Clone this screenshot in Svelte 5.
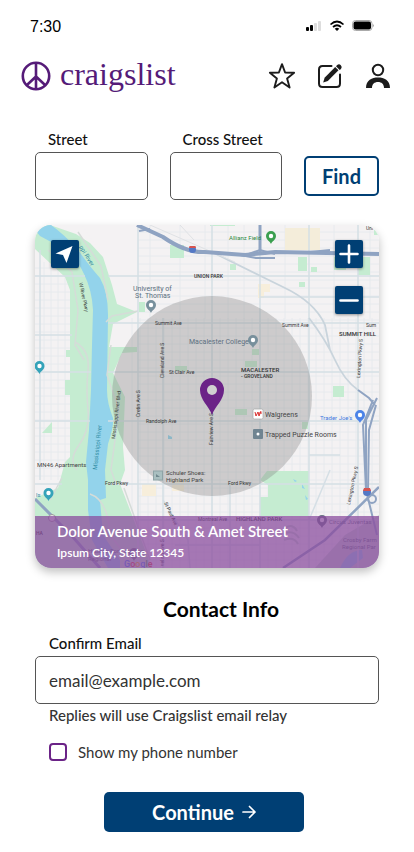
<script>
  let street = $state('');
  let crossStreet = $state('');
  let email = $state('email@example.com');
  let showPhone = $state(false);

  const range = (from, to, step) => {
    const out = [];
    for (let v = from; v <= to; v += step) out.push(v);
    return out;
  };
  const minorX = range(132, 378, 8);
  const minorY = range(232, 566, 8);
  const majorX = [138, 163, 212, 260, 309, 358];
  const majorY = [276, 323, 372, 421, 484, 520];

  // [text, x, y, class, rotation]
  const labels = [
    ['Allianz Field', 229, 240, 'park small', 0],
    ['UNION PARK', 194, 278, 'area', 0],
    ['University of', 133, 291, 'place', 0],
    ['St. Thomas', 135, 298, 'place', 0],
    ['Summit Ave', 155, 325, 'road', 0],
    ['Summit Ave', 282, 327, 'road', 0],
    ['Sum', 366, 327, 'road', 0],
    ['Uni', 366, 230, 'road', 0],
    ['SUMMIT HILL', 339, 336, 'area wide', 0],
    ['Macalester College', 189, 344, 'place', 0],
    ['St Clair Ave', 169, 374, 'road', 0],
    ['MACALESTER', 241, 372, 'area wide', 0],
    ['- GROVELAND', 241, 378, 'area', 0],
    ['Randolph Ave', 146, 423, 'road', 0],
    ['Walgreens', 265, 417, 'shop', 0],
    ['Trapped Puzzle Rooms', 265, 437, 'shop', 0],
    ["Trader Joe's", 320, 420, 'blue small', 0],
    ['MN46 Apartments', 37, 467, 'shop small', 0],
    ['Schuler Shoes:', 166, 475, 'shop small', 0],
    ['Highland Park', 166, 482, 'shop small', 0],
    ['Ford Pkwy', 105, 485, 'road', 0],
    ['Ford Pkwy', 228, 485, 'road', 0],
    ['Montreal Ave', 198, 521, 'road', 0],
    ['HIGHLAND PARK', 236, 521, 'area wide', 0],
    ['Circus Juventas', 329, 524, 'place small', 0],
    ['Crosby Farm', 343, 542, 'place small', 0],
    ['Regional Par', 342, 549, 'place small', 0],
    ['Historic Fort Snelling', 88, 553, 'place small', 0],
    ['Regional', 88, 561, 'place small', 0],
    ['ls', 36, 497, 'water', 0],
    ['HA', 36, 535, 'area', 0],
    ['W River Pkwy', 79, 283, 'road', 78],
    ['ppi River', 79, 247, 'water', 58],
    ['Mississippi River', 97, 470, 'water', -84],
    ['Mississippi River Blvd', 115, 439, 'road', -83],
    ['Cretin Ave S', 140, 417, 'road', -90],
    ['Cleveland Ave S', 164, 378, 'road', -90],
    ['Fairview Ave S', 213, 445, 'road', -90],
    ['Lexington Pkwy S', 360, 378, 'road', -86],
    ['Lexington Pkwy S', 350, 505, 'road', -78],
    ['St Paul Ave', 164, 503, 'road', 65],
    ['vel nd Ave S', 164, 566, 'road', -90],
  ];
</script>

<div class="app">
  <div class="status">
    <span>7:30</span>
    <svg width="68" height="12" viewBox="0 0 68 12" aria-hidden="true">
      <rect x="0" y="7" width="3" height="4" rx="1" />
      <rect x="4" y="5" width="3" height="6" rx="1" />
      <rect x="8" y="3" width="3" height="8" rx="1" fill="#ddd" />
      <rect x="12" y="1" width="3" height="10" rx="1" fill="#ddd" />
      <path d="M24.5 4.5Q31 -1.5 37.500 4.500M27 7Q31 3.500 35 7" fill="none" stroke="#000" stroke-width="1.700" />
      <path d="M28.700 8.700Q31 7 33.300 8.700L31 11Z" />
      <rect x="46.500" y=".5" width="19.500" height="10" rx="3" fill="#fff" stroke="#aaa" />
      <rect x="47.500" y="1.500" width="17.500" height="8" rx="2" />
      <path d="M66.800 4v3q1-.5 1-1.500t-1-1.500Z" fill="#999" />
    </svg>
  </div>

  <header>
    <a class="brand" href="/">
      <svg width="30" height="30" viewBox="0 0 30 30" fill="none" stroke="#551b78" stroke-width="2.600" aria-hidden="true">
        <circle cx="15" cy="15" r="13.200" />
        <path d="M15 2v26M15 15.500L5.700 24.300M15 15.500l9.300 8.800" />
      </svg>
      <span>craigslist</span>
    </a>
    <nav>
      <button type="button" aria-label="Favorites">
        <svg width="28" height="28" viewBox="0 0 28 28" fill="none" stroke="#1c1c1c" stroke-width="1.900" stroke-linejoin="round">
          <path d="M14 2.200l3.100 8.300 9 .2-7 5.700 2.500 9.100-7.600-5.200-7.600 5.200 2.500-9.100-7-5.700 9-.2Z" />
        </svg>
      </button>
      <button type="button" aria-label="New post">
        <svg width="28" height="28" viewBox="0 0 28 28" fill="none" stroke="#1c1c1c" stroke-width="2" stroke-linecap="round">
          <path d="M15.500 4H6.500q-3.500 0-3.500 3.500v14q0 3.500 3.500 3.500h14q3.500 0 3.500-3.500V12.500" />
          <path d="M8.600 15.700L19.200 5l3.300 3.200-10.700 10.700-4.600 1.700Z" fill="#1c1c1c" stroke="none" />
          <path d="M20 4.300l1.200-1.200a2.700 2.700 0 0 1 3.800 3.800l-1.300 1.200Z" fill="#1c1c1c" stroke="none" />
        </svg>
      </button>
      <button type="button" aria-label="Account">
        <svg width="28" height="28" viewBox="0 0 28 28" fill="none">
          <circle cx="14" cy="8" r="5.200" stroke="#1c1c1c" stroke-width="2" />
          <path d="M2 26C2 18 8 15.500 14 15.500s12 2.500 12 10.500h-6c0-4-2.500-6-6-6s-6 2-6 6Z" fill="#1c1c1c" />
        </svg>
      </button>
    </nav>
  </header>

  <main>
    <form class="search" onsubmit={(e) => e.preventDefault()}>
      <div class="field">
        <label for="street">Street</label>
        <input id="street" type="text" bind:value={street} />
      </div>
      <div class="field">
        <label for="cross">Cross Street</label>
        <input id="cross" type="text" bind:value={crossStreet} />
      </div>
      <button class="find" type="submit">Find</button>
    </form>

    <section class="map" aria-label="Map">
      <svg class="canvas" viewBox="35 225 344 343" preserveAspectRatio="xMidYMid slice">
        <rect x="35" y="225" width="344" height="343" fill="#f4f2f3" />
        <g stroke="#e4e8ec" stroke-width=".8">
          {#each minorX as x}<path d="M{x} 318V568" />{/each}
          {#each minorY as y}<path d="M138 {y}H379" />{/each}
          {#each range(44, 72, 7) as x}<path d="M{x} 262V480" />{/each}
          {#each range(268, 476, 8) as y}<path d="M35 {y}H70" />{/each}
          <path d="M205 225v94M228 225v94M244 225v94M285 225v94M334 225v94M370 225v94M180 225v94M150 225v94" />
        </g>
        <path d="M82 225H138V310H118L104 258Z" fill="#f4f2f3" />
        <path d="M285 228h21v22h-21ZM306 228h14v22h-14Z" fill="#f4edda" />
        <path d="M258 284h12v8h-6v6h-6ZM142 484h14v12h-14ZM172 479h12v12h-12Z" fill="#f7eedb" />
        <g fill="#c5ecd1">
          <path d="M35 225H50L76 234 90 243 103 257 112 285 117 304 137 312 113 324 109 347H137V352L122 353 113 373 125 397 123 447 125 470 120 484 132 515 152 568H35V498L58 488 65 462 70 457V395H65V380H70V357H66V350H70V290L65 277 35 249Z" />
          <path d="M170 245h14v13h-14ZM139 302h6v10h-6ZM230 264h6v6h-6ZM298 257h9v14h-9ZM311 267h6v5h-6ZM299 282h6v5h-6ZM358 257h12v18h-12ZM334 257h12v13h-12ZM333 386h11v11h-11ZM245 361h12v6h-12ZM252 349h7v6h-7ZM235 409h12v6h-12ZM302 422h6v7h-6ZM175 366h12v5h-12ZM42 433l10-11v11Z" />
          <path d="M267 471H309V516H260V497H268V485L260 480Z" />
          <path d="M210 225h25v1h-25ZM374 230h5v5h-5Z" />
        </g>
        <path d="M315 568L345 535 379 515V568Z" fill="#c8d8d1" />
        <g fill="#93d3eb">
          <path d="M37 225H51Q65 235 78 250 91 268 100 278 108 292 108 315L107 390Q107 403 113 418 114 426 108 444L105 470 106 498 100 500 103 535 120 560V568H108L92 540 88 510V480L86 462 89 430 91 390 92 345 93 310Q92 290 84 274 75 255 66 250L40 236 35 230V225Z" />
          <path d="M340 568Q348 550 362 550L363 558 350 568ZM293 479l4 2-2 1ZM302 484l3 5-3-1ZM305 495l3 4-2 1ZM168 435l4 2v2h-4Z" />
        </g>
        <g fill="none" stroke="#d5dfe5" stroke-width="1.500">
          <path d="M48 250L72 272 78 310 75 345 84 360M75 342Q90 350 88 370T88 410 79 445 77 470M78 232L101 266 108 300M111 345L107 375 119 410 115 440 111 470 116 484M50 500L62 478M90 494Q108 500 110 535L136 568M124 488L150 560M106 322L112 316 138 311" stroke="#d5dcd8" />
          {#each majorX as x}<path d="M{x} {x === 163 ? 318 : 225}V568" />{/each}
          {#each majorY as y}<path d="M{y < 500 ? 108 : 138} {y}H379" />{/each}
          <path d="M35 276H85M35 335H72M35 372H91M35 421H90M35 484H62M40 250V480M260 297H379" />
          <path d="M163 500L188 540 190 568M175 545H260M230 484V568M309 520L330 470M309 455H340" />
        </g>
        <g fill="none" stroke="#c9d4dc" stroke-width="1.800">
          <path d="M212 252L283 287Q315 302 325 325L330 350M309 318Q326 340 335 360T358 390" />
          <path d="M150 225L235 262M180 225L194 240" stroke="#dfe1e4" stroke-width="1" />
        </g>
        <g fill="none" stroke="#8fa3c2">
          <path d="M137 225L163 237Q186 253 205 252L245 255 275 252 379 254" stroke-width="4" />
          <path d="M139 231L150 229M235 254L256 258H275M246 255L260 250 275 254M310 252L330 250" stroke-width="2" />
          <path d="M260 225V252" stroke-width="3" />
          <path d="M358 390L369 398 375 405M377 398L366 420V490L377 535M373 400L363 425 366 490M376 405L369 430 368 490" stroke-width="2" />
          <path d="M379 487L325 540 283 568" stroke-width="2.500" />
          <circle cx="372" cy="499" r="4" stroke-width="2" />
          <path d="M35 499L72 536 100 568" stroke-width="3" />
        </g>
        <path d="M285 528q8-5 12 3M283 534q10-5 16 4M284 540q10-4 14 4" fill="none" stroke="#c3d5ce" stroke-width="2" />
        <circle cx="192.500" cy="249.500" r="3.500" fill="#5478c5" /><path d="M189 248h7l-.5-2h-6Z" fill="#d65450" />
        <circle cx="367" cy="492" r="4" fill="#5478c5" /><path d="M363 491h8l-1-3h-6Z" fill="#d65450" />
        <circle cx="52" cy="518" r="3.500" fill="#eee" stroke="#999" />

        <circle cx="212" cy="396" r="100" fill="#828282" fill-opacity=".34" />

        {#snippet marker(x, y, color)}
          <path d="M{x} {y + 8}C{x - 1} {y + 5} {x - 5} {y + 4} {x - 5} {y}a5 5 0 0 1 10 0C{x + 5} {y + 4} {x + 1} {y + 5} {x} {y + 8}Z" fill={color} />
          <circle cx={x} cy={y} r="2.200" fill="#fff" />
        {/snippet}
        {@render marker(271, 236, '#3b9f50')}
        {@render marker(151, 305, '#78909c')}
        {@render marker(253, 340, '#78909c')}
        {@render marker(39.500, 366, '#35a3b9')}
        {@render marker(48.500, 493, '#35a3b9')}
        {@render marker(360, 415, '#4c83e8')}
        {@render marker(322, 520, '#687083')}
        {@render marker(134, 553, '#7c8791')}
        <rect x="253" y="409" width="10" height="10" rx="1.500" fill="#fff" stroke="#a7a7a7" stroke-width=".7" />
        <path d="M255 412l1 4 2-4 1 4 2-5M259 413h3" fill="none" stroke="#d92d2d" />
        <rect x="253" y="429" width="10" height="10" rx="1" fill="#708491" /><circle cx="258" cy="434" r="1.500" fill="#fff" />
        <rect x="153.500" y="471" width="9" height="9" fill="#a9bfc0" stroke="#8ea3a6" /><path d="M156 474l4 3h-4Z" fill="#70898e" />

        {#each labels as [text, x, y, kind, angle]}
          <text class={kind} {x} {y} transform={angle ? `rotate(${angle} ${x} ${y})` : undefined}>{text}</text>
        {/each}
        <text class="google" x="124" y="567"><tspan fill="#4285f4">G</tspan><tspan fill="#ea4335">o</tspan><tspan fill="#fbbc05">o</tspan><tspan fill="#4285f4">g</tspan><tspan fill="#34a853">l</tspan><tspan fill="#ea4335">e</tspan></text>

        <path d="M212 415C209 406 200 400 200 390a12 12 0 0 1 24 0C224 400 215 406 212 415Z" fill="#6b2387" />
        <circle cx="212" cy="390" r="5" fill="#d0d0d0" />
      </svg>

      <button class="tool locate" type="button" aria-label="My location">
        <svg width="28" height="28" viewBox="0 0 28 28"><path d="M21.500 6L15.500 23l-3.500-8-7.500-1.500Z" fill="#fff" /></svg>
      </button>
      <div class="zoom">
        <button class="tool" type="button" aria-label="Zoom in">
          <svg width="28" height="28" viewBox="0 0 28 28"><path d="M5.500 14h17M14 5.500v17" stroke="#fff" stroke-width="2.600" stroke-linecap="round" /></svg>
        </button>
        <button class="tool" type="button" aria-label="Zoom out">
          <svg width="28" height="28" viewBox="0 0 28 28"><path d="M5.500 14.500h17" stroke="#fff" stroke-width="2.600" stroke-linecap="round" /></svg>
        </button>
      </div>
      <div class="caption">
        <p class="cross">Dolor Avenue South &amp; Amet Street</p>
        <p class="city">Ipsum City, State 12345</p>
      </div>
    </section>

    <section class="contact">
      <h2>Contact Info</h2>
      <div class="field">
        <label for="email">Confirm Email</label>
        <input id="email" type="email" aria-describedby="relay" bind:value={email} />
      </div>
      <p id="relay">Replies will use Craigslist email relay</p>
      <label class="check">
        <input type="checkbox" bind:checked={showPhone} />
        <span>Show my phone number</span>
      </label>
      <button class="continue" type="button">
        Continue
        <svg width="14" height="14" viewBox="0 0 14 14" fill="none" stroke="#fff" stroke-width="1.700" stroke-linecap="round" stroke-linejoin="round" aria-hidden="true"><path d="M1 7h12M7.500 1.500L13 7l-5.500 5.500" /></svg>
      </button>
    </section>
  </main>
</div>

<style>
  :global(body) {
    background: #fff;
  }
  .app {
    font-family: Lato, 'Open Sans', sans-serif;
    color: #111;
    padding-bottom: 20px;
  }
  .app * {
    box-sizing: border-box;
  }
  button {
    font-family: inherit;
    cursor: pointer;
  }
  svg {
    display: block;
  }
  p,
  h2 {
    margin: 0;
  }
  .status {
    display: flex;
    align-items: center;
    justify-content: space-between;
    height: 52px;
    padding: 0 40px 0 30px;
    font: 16px 'Liberation Sans', sans-serif;
    color: #000;
  }
  .status span {
    padding-top: 2px;
  }
  header {
    display: flex;
    align-items: center;
    justify-content: space-between;
    height: 48px;
    padding: 0 22px 0 21px;
  }
  .brand {
    display: flex;
    align-items: center;
    gap: 9px;
    color: #551b78;
    font: 32px/40px 'Liberation Serif', serif;
    text-decoration: none;
  }
  .brand span {
    padding-bottom: 4px;
  }
  nav {
    display: flex;
    gap: 20px;
  }
  nav button {
    padding: 0;
    border: 0;
    background: none;
  }
  main {
    padding: 30px 35px 0;
  }
  .search {
    display: flex;
    align-items: flex-end;
    gap: 22px;
  }
  .field {
    display: flex;
    flex: 1;
    flex-direction: column;
    gap: 4px;
    min-width: 0;
  }
  .field label {
    padding-left: 13px;
    font-size: 15px;
    line-height: 18px;
    font-weight: 500;
  }
  .field input {
    width: 100%;
    height: 48px;
    padding: 0 13px;
    border: 1px solid #555;
    border-radius: 5px;
    background: #fff;
    color: #333;
    font: 17px Lato, sans-serif;
  }
  .find {
    width: 75px;
    height: 40px;
    margin-bottom: 4px;
    padding: 0;
    border: 2px solid #003f74;
    border-radius: 5px;
    background: #fff;
    color: #003f74;
    font-size: 20px;
    font-weight: 700;
  }
  .map {
    position: relative;
    margin-top: 25px;
    overflow: hidden;
    border-radius: 16px;
    box-shadow: 0 4px 10px rgb(0 0 0 / 25%);
  }
  .canvas {
    width: 100%;
    height: auto;
  }
  .canvas text {
    font-family: Roboto, sans-serif;
    font-size: 7px;
  }
  .canvas .small {
    font-size: 6px;
  }
  .canvas .road {
    font-size: 5px;
    fill: #333;
  }
  .canvas .area {
    font-size: 5px;
    font-weight: 500;
    fill: #333;
  }
  .canvas .wide {
    font-size: 6px;
  }
  .canvas .place {
    fill: #5c7080;
  }
  .canvas .park {
    fill: #2f8a44;
  }
  .canvas .shop {
    fill: #444;
  }
  .canvas .blue {
    fill: #3f78de;
  }
  .canvas .water {
    font-size: 6px;
    fill: #318da5;
  }
  .canvas .google {
    font-size: 9px;
    font-weight: 500;
  }
  .tool {
    width: 28px;
    height: 28px;
    padding: 0;
    border: 0;
    border-radius: 2px;
    background: #003f74;
    box-shadow: 0 1px 3px rgb(0 0 0 / 40%);
  }
  .locate {
    position: absolute;
    top: 15px;
    left: 16px;
  }
  .zoom {
    position: absolute;
    top: 15px;
    right: 16px;
    display: flex;
    flex-direction: column;
    gap: 18px;
  }
  .caption {
    position: absolute;
    inset: auto 0 0;
    padding: 5px 22px 7px;
    background: rgb(137 75 158 / 74%);
    color: #fff;
    font-weight: 600;
  }
  .cross {
    font-size: 15px;
    line-height: 20px;
  }
  .city {
    padding-top: 4px;
    font-size: 12px;
    line-height: 16px;
  }
  .contact {
    display: flex;
    flex-direction: column;
    padding-top: 28px;
  }
  h2 {
    padding-left: 28px;
    color: #000;
    font-size: 21px;
    line-height: 26px;
    text-align: center;
  }
  .contact .field {
    padding-top: 12px;
  }
  .contact .field label {
    padding-left: 14px;
  }
  #relay {
    padding: 2px 14px 0;
    color: #333;
    font-size: 15px;
    line-height: 18px;
    font-weight: 500;
  }
  .check {
    display: flex;
    align-items: center;
    align-self: flex-start;
    gap: 11px;
    margin: 19px 14px 0;
    color: #333;
    font-size: 15px;
    line-height: 18px;
  }
  .check input {
    width: 18px;
    height: 18px;
    margin: 0;
    appearance: none;
    border: 2px solid #6b2387;
    border-radius: 4px;
    background: #fff;
  }
  .check input:checked {
    background: #6b2387;
  }
  .continue {
    display: flex;
    align-items: center;
    align-self: center;
    justify-content: center;
    gap: 8px;
    width: 200px;
    height: 40px;
    margin: 31px 6px 0 0;
    border: 0;
    border-radius: 5px;
    background: #003f74;
    color: #fff;
    font-size: 20px;
    font-weight: 700;
  }
</style>
